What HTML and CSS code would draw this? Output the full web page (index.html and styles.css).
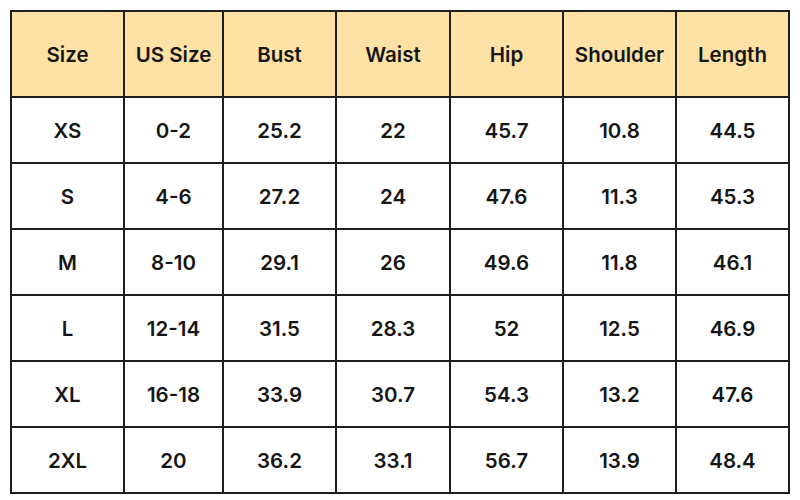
FILE: index.html
```html
<!DOCTYPE html>
<html>
<head>
<meta charset="utf-8">
<link rel="stylesheet" href="styles.css">
</head>
<body>
<table class="chart">
  <colgroup>
    <col class="c1"><col class="c2"><col class="c3"><col class="c4"><col class="c5"><col class="c6"><col class="c7">
  </colgroup>
  <thead>
    <tr class="head"><th>Size</th><th>US Size</th><th>Bust</th><th>Waist</th><th>Hip</th><th>Shoulder</th><th>Length</th></tr>
  </thead>
  <tbody>
    <tr><td>XS</td><td>0-2</td><td>25.2</td><td>22</td><td>45.7</td><td>10.8</td><td>44.5</td></tr>
    <tr><td>S</td><td>4-6</td><td>27.2</td><td>24</td><td>47.6</td><td>11.3</td><td>45.3</td></tr>
    <tr><td>M</td><td>8-10</td><td>29.1</td><td>26</td><td>49.6</td><td>11.8</td><td>46.1</td></tr>
    <tr><td>L</td><td>12-14</td><td>31.5</td><td>28.3</td><td>52</td><td>12.5</td><td>46.9</td></tr>
    <tr><td>XL</td><td>16-18</td><td>33.9</td><td>30.7</td><td>54.3</td><td>13.2</td><td>47.6</td></tr>
    <tr><td>2XL</td><td>20</td><td>36.2</td><td>33.1</td><td>56.7</td><td>13.9</td><td>48.4</td></tr>
  </tbody>
</table>
</body>
</html>
```
FILE: styles.css
```css
html, body {
  margin: 0;
  padding: 0;
  background: #ffffff;
}
body {
  padding: 10px;
  font-family: Inter, Lato, sans-serif;
  color: #161616;
}
.chart {
  border-collapse: separate;
  border-spacing: 0;
  table-layout: fixed;
  width: 780px;
  border-left: 2px solid #1e1e1e;
  border-top: 2px solid #1e1e1e;
}
.c1 { width: 113px; }
.c2 { width: 99px; }
.c3 { width: 113px; }
.c4 { width: 114px; }
.c5 { width: 113px; }
.c6 { width: 113px; }
.c7 { width: 113px; }
.chart th, .chart td {
  box-sizing: border-box;
  border-right: 2px solid #1e1e1e;
  border-bottom: 2px solid #1e1e1e;
  padding: 0;
  text-align: center;
  vertical-align: middle;
  font-size: 20.5px;
  font-weight: 600;
  white-space: nowrap;
}
.head th {
  height: 86px;
  background: #fee2a5;
}
.chart td {
  height: 66px;
}
```
